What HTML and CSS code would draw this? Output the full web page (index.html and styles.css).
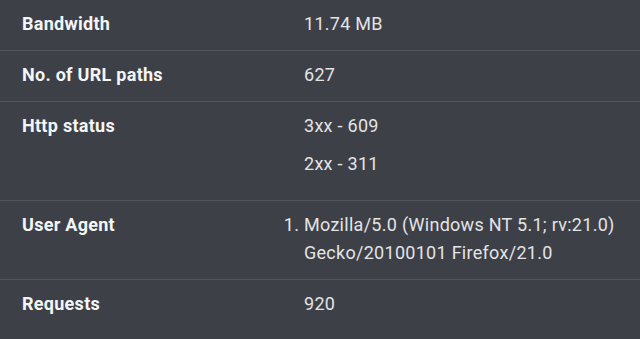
FILE: index.html
```html
<!DOCTYPE html>
<html>
<head>
<meta charset="utf-8">
<link rel="stylesheet" href="styles.css">
</head>
<body>
<div class="details">
  <div class="row">
    <div class="label">Bandwidth</div>
    <div class="value">11.74 MB</div>
  </div>
  <div class="row">
    <div class="label">No. of URL paths</div>
    <div class="value">627</div>
  </div>
  <div class="row">
    <div class="label">Http status</div>
    <div class="value">
      <div class="status">3xx - 609</div>
      <div class="status">2xx - 311</div>
    </div>
  </div>
  <div class="row">
    <div class="label">User Agent</div>
    <div class="value">
      <ol class="agents">
        <li>Mozilla/5.0 (Windows NT 5.1; rv:21.0) Gecko/20100101 Firefox/21.0</li>
      </ol>
    </div>
  </div>
  <div class="row">
    <div class="label">Requests</div>
    <div class="value">920</div>
  </div>
</div>
</body>
</html>
```
FILE: styles.css
```css
html, body {
  margin: 0;
  padding: 0;
  background: #3d4046;
}
body {
  font-family: Roboto, "Liberation Sans", sans-serif;
  font-size: 18px;
  line-height: 28px;
  letter-spacing: 0.28px;
  color: #e6e7e9;
  width: 640px;
  height: 339px;
  overflow: hidden;
}
.details {
  display: flex;
  flex-direction: column;
}
.row {
  display: grid;
  grid-template-columns: 282px 1fr;
  padding: 10px 0 12px 22px;
  border-top: 1px solid #52565c;
}
.row:first-child {
  border-top: none;
}
.label {
  font-weight: 700;
  color: #f4f5f6;
}
.value {
  color: #e3e4e6;
}
.status {
  margin-bottom: 10px;
}
.agents {
  margin: 0;
  padding: 0;
  list-style-position: outside;
  width: 330px;
}
```
